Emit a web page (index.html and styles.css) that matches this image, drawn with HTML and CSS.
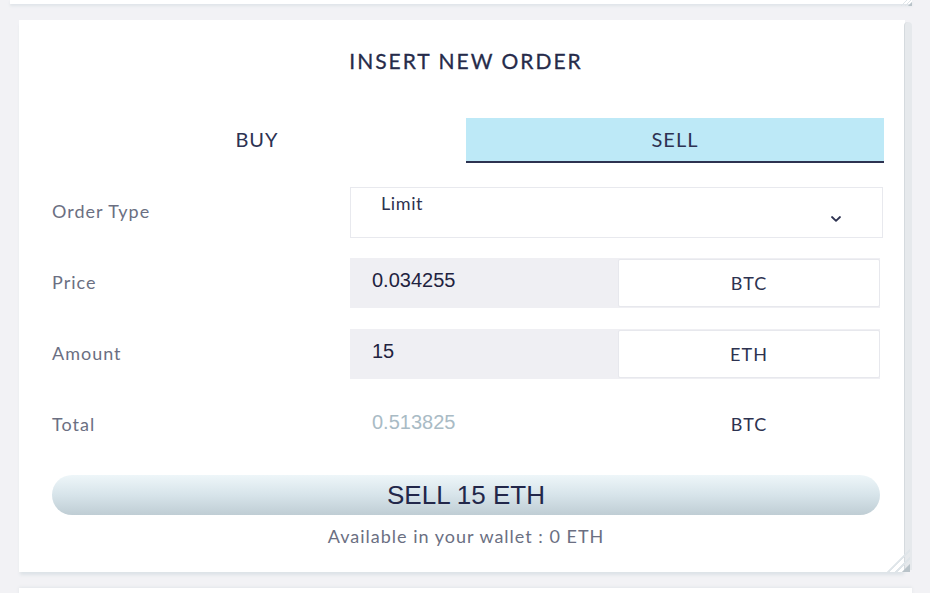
FILE: index.html
```html
<!DOCTYPE html>
<html>
<head>
<meta charset="utf-8">
<link rel="stylesheet" href="styles.css">
</head>
<body>
<div class="page">
  <div class="card-top"><span class="grip grip-top"></span></div>
  <div class="card">
    <span class="scrollbar"></span>
    <h1 class="title">INSERT NEW ORDER</h1>
    <div class="tabs">
      <div class="tab">BUY</div>
      <div class="tab tab-active">SELL</div>
    </div>
    <div class="form">
      <div class="row">
        <div class="label">Order Type</div>
        <div class="select">
          <span class="select-value">Limit</span>
          <svg class="chevron" width="12" height="8" viewBox="0 0 12 8"><path d="M2 2 L6 5.8 L10 2" fill="none" stroke="#2d3250" stroke-width="1.8" stroke-linecap="round" stroke-linejoin="round"/></svg>
        </div>
      </div>
      <div class="row">
        <div class="label">Price</div>
        <div class="field">
          <div class="input">0.034255</div>
          <div class="unit">BTC</div>
        </div>
      </div>
      <div class="row">
        <div class="label">Amount</div>
        <div class="field">
          <div class="input">15</div>
          <div class="unit">ETH</div>
        </div>
      </div>
      <div class="row">
        <div class="label">Total</div>
        <div class="field plain">
          <div class="input total">0.513825</div>
          <div class="unit unit-plain">BTC</div>
        </div>
      </div>
    </div>
    <button class="submit">SELL 15 ETH</button>
    <p class="wallet">Available in your wallet : 0 ETH</p>
    <span class="grip"></span>
  </div>
  <div class="card-bottom"></div>
</div>
</body>
</html>
```
FILE: styles.css
```css
* { box-sizing: border-box; }
html, body { margin: 0; padding: 0; }
body {
  background: #f2f2f5;
  font-family: Lato, "Open Sans", sans-serif;
  width: 930px;
  height: 593px;
  overflow: hidden;
}
.page {
  display: flex;
  flex-direction: column;
  gap: 16px;
}
.card-top {
  position: relative;
  height: 4px;
  margin-left: 10px;
  width: 902px;
  background: #fff;
  box-shadow: 0 2px 3px #dfe4e8;
}
.card {
  position: relative;
  margin-left: 19px;
  width: 886px;
  height: 552px;
  background: #fff;
  box-shadow: 0 4px 3px -1px #dde3e7;
  padding: 0 21px 0 29px;
  display: flex;
  flex-direction: column;
}
.card-bottom {
  margin-left: 19px;
  width: 893px;
  height: 20px;
  background: #fff;
  box-shadow: 0 -1px 3px #e3e6ea;
}
.scrollbar {
  position: absolute;
  right: -7px;
  top: 2px;
  width: 8px;
  height: 548px;
  border-radius: 4px 4px 0 0;
  background: #e6e9ec;
  border-left: 1px solid #d5dade;
}
.grip {
  position: absolute;
  right: -5px;
  bottom: 0;
  width: 26px;
  height: 26px;
  background: linear-gradient(135deg, transparent 55%, #dfe5e9 56%, #dfe5e9 60%, transparent 61%, transparent 70%, #dfe5e9 71%, #dfe5e9 75%, transparent 76%, transparent 84%, #b9c3c9 85%);
}
.grip-top { bottom: -2px; height: 10px; width: 16px; right: 0; }
.title {
  margin: 30px 0 0;
  text-align: center;
  font-size: 21px;
  line-height: 22px;
  font-weight: 400;
  letter-spacing: 2px;
  color: #262b4a;
  -webkit-text-stroke: 0.3px #262b4a;
}
.tabs {
  margin-top: 46px;
  display: flex;
  height: 45px;
}
.tab {
  flex: 1;
  text-align: center;
  font-size: 20px;
  line-height: 43px;
  color: #2d3252;
  letter-spacing: 1px;
  border-bottom: 2px solid transparent;
}
.tab-active {
  background: #bde9f7;
  border-bottom-color: #2d3250;
}
.form {
  margin-top: 24px;
  display: flex;
  flex-direction: column;
  gap: 21px;
  padding-left: 4px;
  width: 832px;
}
.row {
  display: flex;
  align-items: center;
  height: 50px;
}
.label {
  width: 298px;
  font-size: 18px;
  color: #6b6f82;
  letter-spacing: 1px;
  padding-bottom: 3px;
}
.select {
  flex: 1;
  align-self: stretch;
  height: 51px;
  margin-right: -3px;
  border: 1px solid #e8e9ee;
  position: relative;
  padding: 4px 40px 0 30px;
  display: flex;
  justify-content: space-between;
}
.select-value {
  font-size: 18px;
  color: #2d3250;
  letter-spacing: 0.6px;
  line-height: 22px;
}
.chevron { margin-top: 23px; }
.field {
  display: flex;
  width: 530px;
  height: 50px;
  background: #efeff3;
}
.field.plain { background: transparent; }
.input {
  width: 268px;
  padding-left: 22px;
  font-family: "Liberation Sans", Arial, sans-serif;
  font-size: 20px;
  line-height: 44px;
  color: #1f2340;
}
.input.total { color: #a9bbc5; }
.unit {
  flex: 1;
  margin: 1px 0;
  background: #fff;
  border: 1px solid #e7e8ed;
  border-radius: 2px;
  text-align: center;
  font-size: 18px;
  line-height: 46px;
  color: #2d3250;
  letter-spacing: 1px;
}
.unit-plain { background: transparent; border-color: transparent; line-height: 44px; }
.submit {
  margin: 25px 0 0 4px;
  width: 828px;
  height: 40px;
  border: none;
  border-radius: 20px;
  background: linear-gradient(180deg, #eef6f9 0%, #d7e4ea 50%, #bfcdd4 100%);
  font-family: "Liberation Sans", Arial, sans-serif;
  font-size: 26px;
  color: #22274a;
  padding: 0;
  line-height: 36px;
}
.wallet {
  margin: 10px 0 0;
  text-align: center;
  font-size: 18px;
  color: #6b6f82;
  letter-spacing: 1px;
}
```
